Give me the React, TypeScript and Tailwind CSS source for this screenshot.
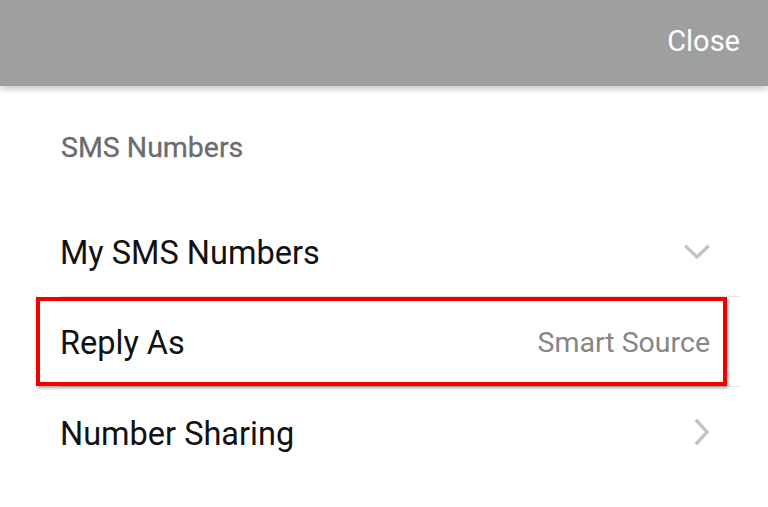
import React from "react";

function ChevronDown() {
  return (
    <svg width="26" height="16" viewBox="0 0 26 16" fill="none">
      <path d="M2.5 3 L13 13 L23.5 3" stroke="#c4c4c4" strokeWidth="3.4" strokeLinecap="square" strokeLinejoin="miter" />
    </svg>
  );
}

function ChevronRight() {
  return (
    <svg width="16" height="28" viewBox="0 0 16 28" fill="none">
      <path d="M3 3 L13 14 L3 25" stroke="#c4c4c4" strokeWidth="3.4" strokeLinecap="square" strokeLinejoin="miter" />
    </svg>
  );
}

export default function App() {
  return (
    <div
      className="relative w-[768px] h-[507px] bg-white overflow-hidden"
      style={{ fontFamily: "Roboto, 'Noto Sans', sans-serif" }}
    >
      <div className="h-[86px] bg-[#9e9fa1] flex items-center justify-end pr-[28px] shadow-[0_3px_7px_rgba(0,0,0,0.22)] relative z-10">
        <span className="mb-[4px] text-white text-[29px] leading-none">Close</span>
      </div>
      <div className="pl-[61px] h-[121px] flex items-center">
        <span className="mt-[3px] text-[#6a6b6d] text-[28.5px] leading-none [-webkit-text-stroke:0.3px_#6a6b6d]">SMS Numbers</span>
      </div>
      <div className="ml-[60px] mr-[28px]">
        <div className="h-[90px] flex items-center justify-between pr-[30px] border-b border-[#e6e6e6]">
          <span className="mt-[4px] text-[#111] text-[32.5px] leading-none">My SMS Numbers</span>
          <ChevronDown />
        </div>
        <div className="h-[90px] flex items-center justify-between pr-[30px] border-b border-[#e6e6e6]">
          <span className="mt-[4px] text-[#111] text-[32.5px] leading-none">Reply As</span>
          <span className="mt-[4px] text-[#868686] text-[28.5px] leading-none">Smart Source</span>
        </div>
        <div className="h-[90px] flex items-center justify-between pr-[30px]">
          <span className="mt-[4px] text-[#111] text-[32.5px] leading-none">Number Sharing</span>
          <ChevronRight />
        </div>
      </div>
      <div className="absolute left-[36px] top-[297px] w-[691px] h-[89px] border-4 border-[#f00000] shadow-[1px_2px_3px_rgba(0,0,0,0.35)] pointer-events-none" />
    </div>
  );
}
